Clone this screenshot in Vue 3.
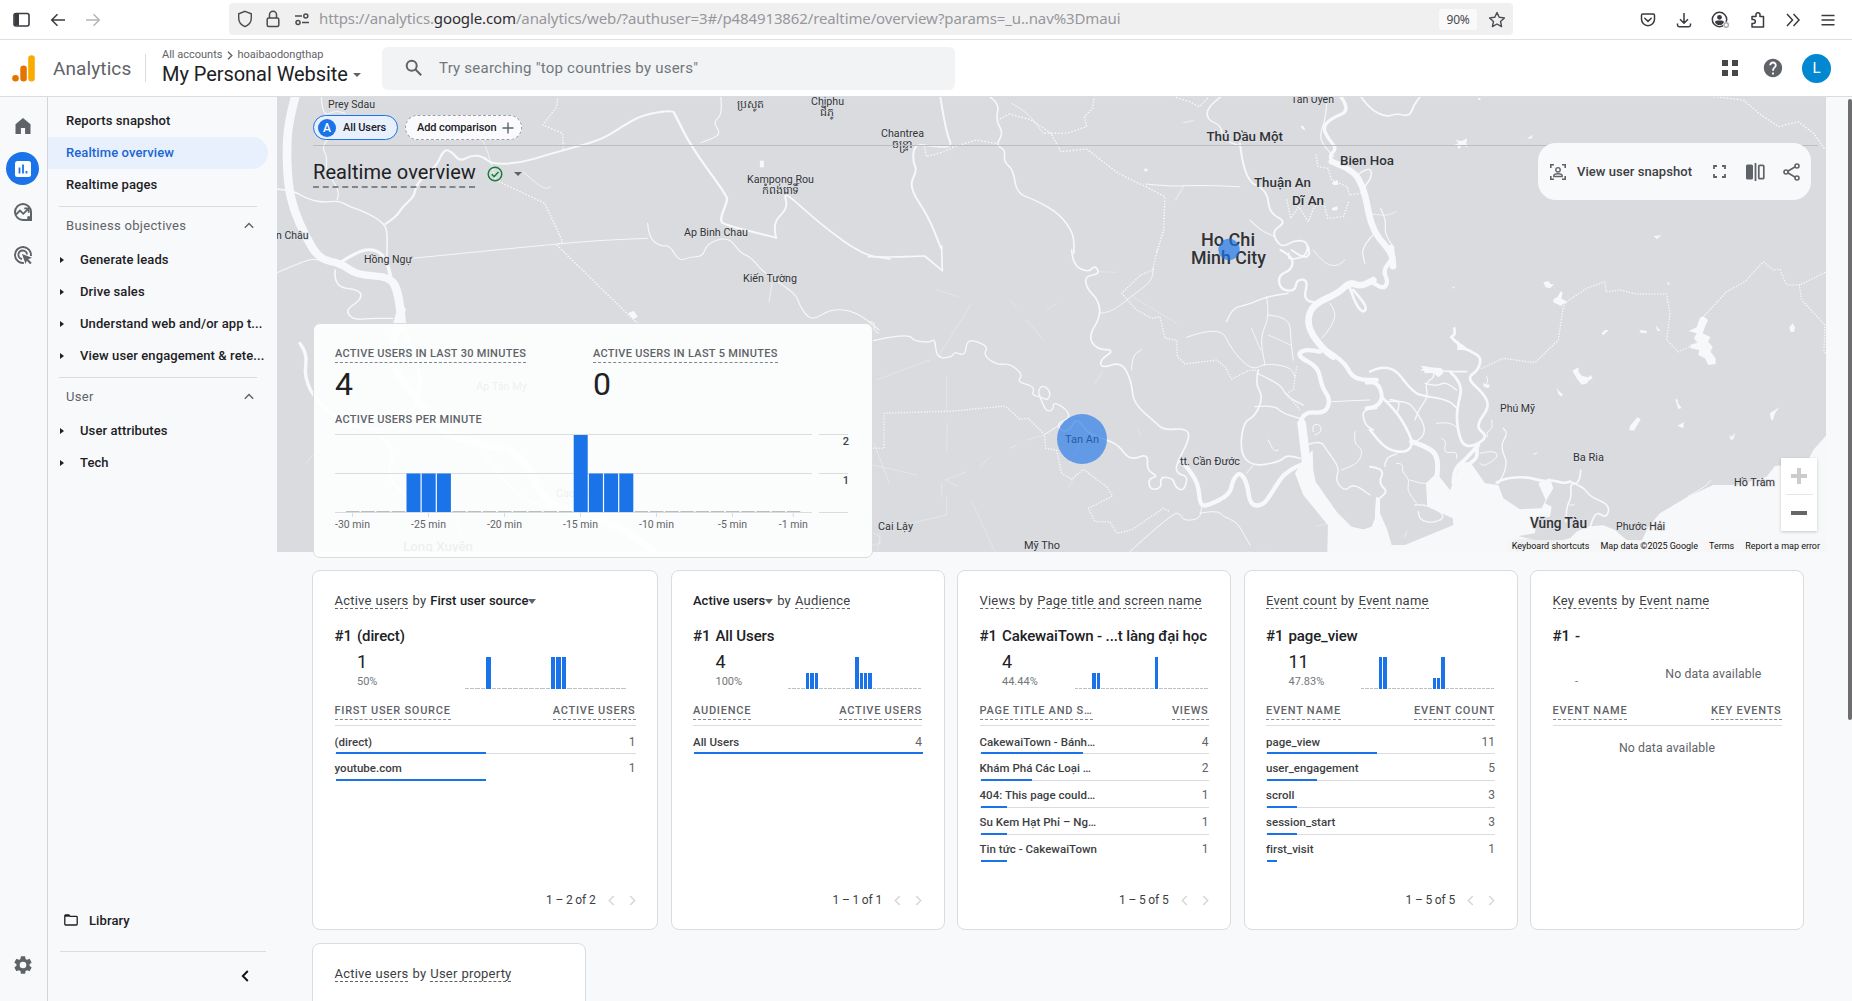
<script setup>
const smooth = (s) => {
  const p = s.split(' ').map((q) => q.split(',').map(Number))
  let d = `M${p[0]}`
  for (let i = 1; i < p.length - 1; i++) {
    d += `Q${p[i]} ${(p[i][0] + p[i + 1][0]) / 2},${(p[i][1] + p[i + 1][1]) / 2}`
  }
  return d + `L${p[p.length - 1]}`
}

// Waterways and borders, grouped by map tile: [stroke width, points]
const tiles = [
  {
    t: 'translate(270 90) scale(.3954 .3333)',
    rivers: [
      [22, '66,10 50,80 42,160 45,280 60,360 90,440 125,508 180,520 220,555 305,560 325,610 335,720'],
      [9, '175,520 225,480 270,478 295,510 305,560'],
      [4, '18,297 60,302 90,325 130,338 175,332 200,350 240,365 292,402 297,440 295,520'],
      [6, '292,402 320,380 335,350 365,320 370,280 420,230 440,178 460,185 480,215 510,195 540,200 560,222 630,220 700,195 760,175 840,148 890,110 940,75 1018,60 1025,75 1065,170 1156,318 1156,335 1137,390 1150,405 1280,443'],
      [5, '1280,443 1270,400 1310,355 1300,310 1320,325 1400,410 1500,495 1568,507'],
      [2.5, '360,505 720,462 850,450 955,445'],
      [3, '955,400 958,445 990,470 1010,465 1035,515 1060,500 1095,500 1105,460 1160,440 1190,490 1215,500 1250,550 1330,610 1340,650 1370,695 1420,655 1480,665 1520,700 1540,720'],
      [4, '165,540 160,590 230,600 230,630 190,660 210,690 250,685 310,685'],
      [3, '18,548 95,507 125,510'],
      [3, '130,20 132,80 165,62 190,70'],
      [3, '145,150 130,170 145,200 140,240 175,300 170,330'],
      [3, '1140,20 1145,75 1120,95 1140,130 1120,145 1090,158'],
      [2, '485,75 510,110 545,160 558,220'],
      [2, '640,245 690,300 710,290'],
      [2, '1270,580 1262,635'],
      [3, '50,340 60,380 75,420']
    ],
    dots: [
      '728,20 725,50 690,105 740,130 742,180',
      '560,222 570,270 695,340 740,455 725,465 920,690 950,720'
    ],
    lakes: ['905,670 920,662 930,680 920,688', '1239,212 1249,212 1249,232 1239,232']
  },
  {
    t: 'translate(620 0) scale(.3954 .3333)',
    rivers: [
      [5, '810,290 825,400 842,442 790,440 745,430 740,485 752,510 730,560 780,650 812,745'],
      [4, '935,290 960,310 950,360 970,400 950,435 975,450 970,485 995,510 1003,580 1050,600 1110,640 1148,700 1148,760'],
      [3, '1330,552 1400,560 1450,555 1568,560'],
      [2, '1425,560 1405,600'],
      [2, '990,310 1030,335 1070,400'],
      [4, '1520,290 1485,320 1485,360 1520,375 1525,420 1568,438'],
      [2, '1425,368 1450,362']
    ],
    dots: [
      '842,442 900,420 950,430',
      '770,440 775,470 820,455 842,442',
      '955,360 985,342 1040,360 1090,400 1115,455 1180,447 1260,520 1330,560 1378,590 1375,690 1357,760',
      '1200,290 1195,325 1175,350 1180,380 1130,400 1070,400',
      '1400,290 1440,305 1465,320 1490,290'
    ],
    lakes: ['1326,506 1334,506 1334,514 1326,514']
  },
  {
    t: 'translate(1240 0) scale(.3903 .3333)',
    rivers: [
      [9, '255,285 285,330 235,355 212,380 225,415 248,445 230,465 235,485 290,510 315,560'],
      [17, '235,485 290,510 315,560 325,610 335,670 355,715 390,760 392,800'],
      [3, '222,310 220,355 205,400 210,430 240,470'],
      [5, '310,290 330,325 375,352 400,340 435,350 445,315 465,285'],
      [5, '0,430 10,540 70,570 75,640 120,665 80,695 105,745 140,720 175,725 170,770 125,780 125,760'],
      [4, '300,525 330,500 340,525 320,560'],
      [3, '360,625 375,660 370,700 395,745'],
      [3, '25,660 50,690 90,710'],
      [3, '345,700 310,740 320,790'],
      [2, '330,640 370,650 400,635']
    ],
    dots: [
      '195,465 200,500 225,505 235,540 275,560 280,585 310,580',
      '120,600 130,655 150,620 175,665 190,620 215,610 225,655 265,650 280,600',
      '1215,290 1290,300 1335,345 1380,380 1430,365 1470,400 1500,450'
    ],
    lakes: [
      '543,437 560,430 552,420 568,423 582,415 580,430 584,442 568,436 562,448 556,438',
      '736,414 752,404 745,417',
      '1060,708 1080,706 1068,717',
      '155,378 162,378 168,390 160,388',
      '610,294 616,294 616,300 610,300',
      '235,548 250,540 252,554 240,556',
      '235,625 250,618 250,630 238,632'
    ]
  },
  {
    t: 'translate(870 250) scale(.3333)',
    rivers: [
      [5, '-5,20 60,22 164,18'],
      [5, '164,18 217,62'],
      [5, '217,62 215,-12'],
      [20, '1510,90 1475,112 1440,95 1405,130 1335,160 1313,200 1320,245 1362,300 1390,320'],
      [13, '1360,295 1420,330 1445,380 1480,390 1520,390'],
      [8, '1435,100 1455,160 1480,190 1492,170 1450,120'],
      [13, '1350,305 1305,295 1280,318 1345,350 1355,410 1382,450 1365,490 1310,485 1288,515 1305,580 1312,640'],
      [26, '1295,520 1305,600 1315,700'],
      [13, '1305,640 1250,660 1210,720 1180,768 1140,765 1132,700 1110,665 1088,690 1080,735 1010,768 990,765 985,700 950,650 930,630'],
      [5, '605,0 608,45 655,68 675,45 690,72 645,78 650,115 685,150 692,200 655,260 680,298 735,300 690,330 695,355 755,335 785,395 790,460 860,520 880,540 950,535 960,565 915,650 925,672 955,680 940,725 915,710 910,685 870,680 875,715 840,720 835,685 865,680 830,660 835,610 780,632 745,585 710,570'],
      [4, '10,272 50,262 120,255 130,272 180,278 195,265 200,325 245,322 253,305 285,318 290,275 310,270 355,290 340,315 380,345 420,340 460,375 440,395 495,410 485,435 510,440 535,452 542,425 520,405 503,420 515,455 530,485 550,480 550,455 590,478 600,505 560,520 575,545 600,540 620,502 650,545 680,560 710,570'],
      [7, '1232,0 1270,20 1265,60 1225,75 1230,118 1275,125 1280,88 1315,90 1300,150 1345,160'],
      [6, '1265,0 1300,25 1320,15 1315,-10'],
      [3, '950,262 1050,225 1085,300 1145,362 1185,340 1260,350 1275,380'],
      [4, '1070,215 1085,175 1130,165 1190,140 1255,130'],
      [3, '1190,140 1200,200 1170,260 1185,345'],
      [3, '1195,195 1260,200 1262,270 1270,330'],
      [2.5, '1145,235 1165,285 1172,300'],
      [2.5, '1195,255 1262,285'],
      [5, '1165,360 1155,400 1180,440 1155,500 1120,515 1110,610 1150,650 1230,635 1250,615 1290,625'],
      [4, '1165,372 1230,400 1250,440 1300,465'],
      [4, '1155,470 1210,465 1240,490 1290,505'],
      [3, '1150,645 1130,670'],
      [3, '1195,570 1210,605 1225,600'],
      [2.5, '688,190 720,190 785,138 845,95 850,55'],
      [3, '780,905 910,785 935,795 940,812 990,808 995,770'],
      [3, '990,790 1040,780 1060,800 1100,815 1120,850 1140,885'],
      [4, '1310,585 1350,570 1370,600 1410,655 1395,690 1425,725 1450,700 1500,735'],
      [3, '1330,545 1325,525 1350,522 1355,545 1335,555'],
      [5, '1520,475 1475,475 1485,525 1510,540'],
      [3, '1455,545 1450,580 1480,600 1465,640 1415,660'],
      [3, '1385,455 1500,450'],
      [3, '1380,160 1400,185 1385,230 1355,265'],
      [2.5, '1330,0 1360,40 1400,50 1425,30'],
      [3, '785,360 785,320 815,298'],
      [3, '0,215 15,215 10,240 25,250'],
      [3, '525,553 580,518']
    ],
    faint: [
      '302,165 205,320', '20,390 180,330', '230,380 230,480', '232,520 230,600', '10,645 140,675', '290,665 225,690 265,710',
      '305,755 375,905', '700,360 675,400', '785,138 920,220', '420,150 440,172', '470,210 520,270', '200,120 265,140',
      '690,65 740,67', '470,570 523,555', '420,595 440,585', '215,700 215,740', '230,740 230,795 80,830', '530,180 560,160',
      '330,650 362,620', '595,712 620,670', '1338,830 1372,820', '640,560 600,640', '30,850 30,880 10,885', '805,540 812,558'
    ],
    dots: [
      '10,595 42,595 42,490 250,483 405,468 450,508 475,505 523,553 527,595 560,600 575,670 605,688 640,658 710,710 728,738 655,775 675,815 720,815 740,850 785,840 880,775 900,785',
      '862,0 848,60 812,75 755,130 800,180 845,205 870,200 885,265 920,270 922,320 945,342 1040,330 1065,350 1085,388 1135,362 1165,360',
      '1280,350 1270,420 1250,430 1290,480'
    ],
    lakes: ['1300,630 1328,600 1330,660 1337,695 1400,785 1445,830 1480,838 1520,830 1520,910 1372,910 1374,826 1300,735 1275,670']
  },
  {
    t: 'translate(1370 250) scale(.3333)',
    rivers: [
      [13, '63,-10 75,20 38,60 55,95 40,118 0,92'],
      [7, '0,365 60,335 130,430 175,440'],
      [5, '175,440 235,448 265,480'],
      [12, '-10,398 20,392 40,440 22,470 -10,475'],
      [8, '40,445 75,480 105,525 130,580 110,608 50,600 0,540'],
      [15, '125,575 185,595 205,630 200,690'],
      [8, '240,365 280,400 262,470 260,520 275,585 310,590 355,560 315,530 360,470 340,430 290,385 325,360 335,320 290,300 240,262 255,255 253,235'],
      [12, '325,585 290,625 255,655 250,700'],
      [11, '320,590 325,620 300,640'],
      [4, '265,275 262,298 300,300'],
      [4, '135,510 145,480 175,440 165,400 195,380 185,355 155,350'],
      [5, '155,360 190,355 225,365 290,365'],
      [4, '165,400 200,410 225,395 260,420'],
      [4, '45,455 110,450 140,485 165,530 160,560 130,580'],
      [4, '80,490 95,455 60,448'],
      [6, '0,650 45,655 25,700 55,725 20,750 18,800'],
      [4, '45,650 45,625 80,612'],
      [3, '215,565 230,570 220,610 260,605 260,625'],
      [4, '385,700 418,650 390,590 413,550 400,535'],
      [8, '380,698 400,685 470,680 520,695 545,690 580,700 600,695'],
      [5, '600,695 640,710 660,740 720,765 710,805 680,785 665,815 660,835'],
      [5, '632,660 630,700 600,700 605,740 590,770 588,815'],
      [3, '600,765 612,765'],
      [3, '330,610 370,600 388,620 340,650 330,640'],
      [3, '340,408 355,400 350,380'],
      [3, '80,640 100,640 95,665 120,690 110,720 140,760'],
      [4, '135,765 175,762 230,800 190,820 150,810 145,785'],
      [3, '200,520 235,515 265,535'],
      [3, '365,510 370,535 350,545 352,560'],
      [3, '120,690 150,700 170,700'],
      [3, '955,738 1000,715 1022,692'],
      [2, '110,845 105,860']
    ],
    dots: [
      '335,355 400,325 495,338 565,270 580,170 590,155',
      '590,155 650,115 705,95 708,125 750,120 800,132 890,132 900,190 890,270 925,305 970,285',
      '1005,195 1070,125 1125,95 1180,35 1210,60 1230,58 1250,105 1290,105 1370,65',
      '1288,105 1295,150 1365,225 1362,300 1370,315'
    ],
    lakes: [
      '-10,835 5,830 15,805 18,740 30,745 30,790 52,840 65,885 105,885 250,825 248,805 205,785 172,770 168,700 200,670 240,720 250,700 270,640 300,635 345,700 385,705 400,745 450,778 515,775 527,750 505,700 540,685 550,715 535,740 525,760 545,770 540,800 500,805 495,850 445,858 470,865 495,868 430,870 440,905 600,865 620,845 650,830 700,826 735,840 770,870 815,872 835,830 870,790 950,742 1030,705 1100,705 1190,680 1215,648 1310,640 1330,600 1372,553 1372,910 -10,910',
      '990,203 1000,198 1014,210 1005,230 998,250 1022,262 1014,275 1028,290 1022,305 1037,325 1037,342 1015,345 1005,325 985,315 988,300 962,295 960,285 982,278 972,265 980,250 956,243 980,232',
      '520,97 535,93 542,102 552,103 540,115 527,112',
      '573,122 578,130 574,145 590,155 572,167 550,157 550,148 563,140',
      '607,362 625,352 626,365 635,377 655,382 662,374 668,385 655,393 652,400 635,404 622,388',
      '780,528 802,502 812,508 792,542 778,540',
      '1200,490 1228,472 1215,490 1208,513 1202,505',
      '1258,232 1268,220 1275,232 1272,246 1262,246',
      '695,250 705,240 716,240 700,256',
      '808,240 830,242 830,250 812,248',
      '857,226 872,244 862,242',
      '560,410 566,422 578,433 575,440 565,432',
      '916,448 923,448 924,460 935,474 925,477',
      '922,527 942,517 940,535',
      '1078,556 1085,560 1096,548 1090,568 1082,570',
      '410,880 420,868 425,905 412,895',
      '238,262 245,255 255,268 270,280 285,290 280,300 262,300 262,285 250,270',
      '155,347 180,352 215,355 220,370 205,382 190,368 165,370',
      '893,97 898,97 898,104 893,104',
      '248,110 253,110 253,115 248,115',
      '488,612 505,606 495,614',
      '338,400 360,405 355,415 345,412'
    ]
  },
  {
    t: 'translate(300 310) scale(.3827 .3333)',
    rivers: [
      [22, '265,0 235,110 255,200 340,310 370,370 480,405 560,420 600,480 640,570 690,600 760,620 850,660 920,720'],
      [9, '0,100 20,130 10,200 45,280 130,350 200,360 260,350 300,300 320,200 275,60'],
      [9, '205,370 250,420 225,500 280,560'],
      [6, '470,410 520,500 600,580 690,600'],
      [4, '390,560 430,600 400,620 425,680']
    ],
    faint: ['15,460 60,400', '560,90 420,100', '900,100 1300,400', '1240,460 1100,620', '1500,400 1540,520', '1480,660 1515,680 1510,720'],
    dots: [],
    lakes: []
  }
]

// [text, left, baseline, width, font size, weight]
const labels = [
  ['Prey Sdau', 328, 108, 47, 11, 400],
  ['Chiphu', 811, 105, 33, 11, 400],
  ['Chantrea', 881, 137, 43, 11, 400],
  ['Kampong Rou', 747, 183, 67, 11, 400],
  ['Tân Uyên', 1291, 103, 43, 11, 400],
  ['Thủ Dầu Một', 1206.5, 141, 76.5, 13.5, 500],
  ['Bien Hoa', 1340, 164.5, 54, 13.5, 500],
  ['Thuận An', 1254, 187, 57, 13.5, 500],
  ['Dĩ An', 1292, 205, 32, 13.5, 500],
  ['Ho Chi', 1201, 246, 54, 17.5, 500],
  ['Minh City', 1191, 264, 75, 17.5, 500],
  ['n Châu', 276, 239, 32.5, 11, 400],
  ['Hồng Ngự', 364, 262.5, 48, 11, 400],
  ['Ap Binh Chau', 684, 235.5, 64, 11, 400],
  ['Kiến Tường', 743, 281.5, 54, 11, 400],
  ['Ap Tân My', 476, 390, 51, 11, 400],
  ['Cao Lãnh', 556, 497, 45, 11, 400],
  ['Long Xuyên', 403, 550.5, 70, 13.5, 500],
  ['Cai Lậy', 878, 530, 35, 11, 400],
  ['Mỹ Tho', 1024, 549, 36, 11, 400],
  ['Gò Công', 1240, 560, 41, 11, 400],
  ['tt. Cần Đước', 1180, 465, 60, 11, 400],
  ['Tan An', 1065, 442.5, 34, 11, 400],
  ['Phú Mỹ', 1500, 412, 35, 11, 400],
  ['Ba Ria', 1573, 461, 31, 11, 400],
  ['Hồ Tràm', 1734, 485.5, 41, 11, 400],
  ['Vũng Tàu', 1530, 527.5, 57, 14, 500],
  ['Phước Hải', 1616, 530, 49, 11, 400]
]
const khmer = [
  ['ប្រសូត', 750, 108],
  ['ជីភូ', 826.5, 116],
  ['ចន្ទ្រា', 901.5, 147.5],
  ['កំពង់រោទិ៍', 780.5, 193.5]
]

const minuteBars = { 4: 1, 5: 1, 6: 1, 15: 2, 16: 1, 17: 1, 18: 1 }
const ticks = [[0, '-30 min'], [5, '-25 min'], [10, '-20 min'], [15, '-15 min'], [20, '-10 min'], [25, '-5 min'], [29, '-1 min']]

const objectives = ['Generate leads', 'Drive sales', 'Understand web and/or app t...', 'View user engagement & rete...']
const userItems = ['User attributes', 'Tech']

const cards = [
  {
    wide: true, title: [['Active users', 'u'], ['by', ''], ['First user source', 'pick']], top: '(direct)', value: '1', pct: '50%',
    bars: { 4: 32, 16: 32, 17: 32, 18: 32 }, cols: ['First user source', 'Active users'],
    rows: [['(direct)', 1, 150], ['youtube.com', 1, 150]], page: '1 – 2 of 2'
  },
  {
    title: [['Active users', 'pick'], ['by', ''], ['Audience', 'u']], top: 'All Users', value: '4', pct: '100%',
    bars: { 4: 16, 5: 16, 6: 16, 15: 32, 16: 16, 17: 16, 18: 16 }, cols: ['Audience', 'Active users'],
    rows: [['All Users', 4, 229]], page: '1 – 1 of 1'
  },
  {
    title: [['Views', 'u'], ['by', ''], ['Page title and screen name', 'u']], top: 'CakewaiTown - ...t làng đại học', value: '4', pct: '44.44%',
    bars: { 4: 16, 5: 16, 18: 32 }, cols: ['Page title and s…', 'Views'],
    rows: [['CakewaiTown - Bánh…', 4, 102], ['Khám Phá Các Loại …', 2, 51], ['404: This page could…', 1, 26], ['Su Kem Hạt Phỉ – Ng…', 1, 26], ['Tin tức - CakewaiTown', 1, 26]], page: '1 – 5 of 5'
  },
  {
    title: [['Event count', 'u'], ['by', ''], ['Event name', 'u']], top: 'page_view', value: '11', pct: '47.83%',
    bars: { 4: 32, 5: 32, 16: 11, 17: 11, 18: 32 }, cols: ['Event name', 'Event count'],
    rows: [['page_view', 11, 110], ['user_engagement', 5, 50], ['scroll', 3, 30], ['session_start', 3, 30], ['first_visit', 1, 10]], page: '1 – 5 of 5'
  },
  {
    title: [['Key events', 'u'], ['by', ''], ['Event name', 'u']], top: '-', value: '', pct: '-',
    bars: null, cols: ['Event name', 'Key events'], rows: [], page: ''
  }
]
</script>

<template>
  <div class="window">
    <div class="browser">
      <div class="nav-buttons">
        <svg width="18" height="16" viewBox="0 0 18 16"><rect x="1" y="1.5" width="15" height="12.5" rx="2" fill="none" stroke="#3a3a40" stroke-width="1.6" /><rect x="1.5" y="2" width="4.5" height="11.5" fill="#3a3a40" /></svg>
        <svg width="16" height="16" viewBox="0 0 16 16" fill="none" stroke="#3a3a40" stroke-width="1.5"><path d="M15 8H2M7.5 2.2L1.7 8l5.8 5.8" /></svg>
        <svg width="16" height="16" viewBox="0 0 16 16" fill="none" stroke="#b5b5b9" stroke-width="1.5"><path d="M1 8h13M8.500 2.200L14.300 8l-5.800 5.800" /></svg>
      </div>
      <div class="urlbar">
        <svg width="16" height="18" viewBox="0 0 16 18" fill="none" stroke="#4a4a50" stroke-width="1.4"><path d="M8 1.300l6.300 2.500v4.500c0 4-2.700 6.800-6.300 8.300-3.600-1.500-6.300-4.300-6.300-8.300V3.800z" /></svg>
        <svg class="lock" width="14" height="18" viewBox="0 0 14 18" fill="none" stroke="#4a4a50" stroke-width="1.5"><rect x="1.200" y="8" width="11.600" height="8.500" rx="1.500" /><path d="M3.500 8V4.800a3.500 3.500 0 017 0V8" /></svg>
        <svg class="perm" width="16" height="14" viewBox="0 0 16 14" fill="none" stroke="#4a4a50" stroke-width="1.500"><path d="M1 4h7M8 10.500h7" /><circle cx="11.800" cy="4" r="2" /><circle cx="4" cy="10.500" r="2" /></svg>
        <span class="url">https://analytics.<b>google.com</b>/analytics/web/?authuser=3#/p484913862/realtime/overview?params=_u..nav%3Dmaui</span>
        <span class="zoom">90%</span>
        <svg width="18" height="17" viewBox="0 0 18 17" fill="none" stroke="#4a4a50" stroke-width="1.400" stroke-linejoin="round"><path d="M9 1.500l2.200 4.800 5.200.6-3.900 3.500 1.100 5.200L9 13l-4.600 2.600 1.100-5.200L1.600 6.900l5.200-.6z" /></svg>
      </div>
      <div class="ext">
        <svg width="16" height="16" viewBox="0 0 16 16" fill="none" stroke="#3a3a40" stroke-width="1.500"><path d="M2.800 2h10.400c.8 0 1.300.5 1.300 1.300v3.900a6.500 6.500 0 01-13 0V3.300C1.500 2.500 2 2 2.800 2z" /><path d="M4.800 6.300L8 9.400l3.200-3.100" stroke-linecap="round" /></svg>
        <svg width="16" height="16" viewBox="0 0 16 16" fill="none" stroke="#3a3a40" stroke-width="1.500"><path d="M8 1v10M4 7.200l4 4 4-4M1.500 11.500v1.500c0 1 .6 1.700 1.700 1.700h9.600c1.100 0 1.700-.7 1.700-1.700v-1.500" /></svg>
        <svg width="19" height="18" viewBox="0 0 19 18"><circle cx="8.500" cy="8.500" r="7.200" fill="none" stroke="#3a3a40" stroke-width="1.500" /><circle cx="8.500" cy="6.300" r="2.400" fill="#3a3a40" /><path d="M4 11.500c0-1.200 1-2 2.200-2h4.600c1.200 0 2.200.8 2.200 2-1 1.700-2.600 2.600-4.500 2.600S5 13.200 4 11.500z" fill="#3a3a40" /><circle cx="15.200" cy="14" r="3.200" fill="#fff" /><circle cx="15.200" cy="14" r="2.200" fill="none" stroke="#aaa" stroke-width="1.400" /></svg>
        <svg width="16" height="18" viewBox="0 0 16 18" fill="none" stroke="#3a3a40" stroke-width="1.500" stroke-linejoin="round"><path d="M2 16V12.500h1.300a2 2 0 000-4H2V5.500h4V3.800a2 2 0 014 0v1.700h3.500V16z" /></svg>
        <svg width="16" height="14" viewBox="0 0 16 14" fill="none" stroke="#3a3a40" stroke-width="1.500"><path d="M2 1l5.500 6L2 13M8.500 1L14 7l-5.500 6" /></svg>
        <svg width="14" height="14" viewBox="0 0 14 14" stroke="#3a3a40" stroke-width="1.500"><path d="M.5 2.500h13M.5 7h13M.5 11.800h13" /></svg>
      </div>
    </div>

    <header class="appbar">
      <svg class="logo" width="24" height="28" viewBox="0 0 24 28"><circle cx="3.500" cy="24.200" r="3.300" fill="#e37400" /><rect x="8.300" y="11.500" width="6.500" height="16" rx="3.200" fill="#e37400" /><rect x="16.200" y="1.200" width="6.600" height="26.300" rx="3.200" fill="#f9ab00" /></svg>
      <span class="product">Analytics</span>
      <div class="account">
        <div class="crumb"><span>All accounts</span><svg width="6" height="9" viewBox="0 0 6 9" fill="none" stroke="#5f6368" stroke-width="1.400"><path d="M1 .7l3.800 3.800L1 8.300" /></svg><span class="acc">hoaibaodongthap</span></div>
        <div class="property">My Personal Website<i class="tri"></i></div>
      </div>
      <div class="search">
        <svg width="18" height="18" viewBox="0 0 18 18" fill="none" stroke="#5f6368" stroke-width="2"><circle cx="6.700" cy="6.700" r="5" /><path d="M10.500 10.500l5.700 5.700" /></svg>
        <span>Try searching "top countries by users"</span>
      </div>
      <div class="tools">
        <svg width="16" height="16" viewBox="0 0 16 16" fill="#474747"><path d="M0 0h6v6H0zM10 0h6v6h-6zM0 10h6v6H0zM10 10h6v6h-6z" /></svg>
        <svg class="help" width="22" height="22" viewBox="0 0 24 24" fill="#5f6368"><path d="M12 2C6.480 2 2 6.480 2 12s4.480 10 10 10 10-4.480 10-10S17.520 2 12 2zm1 17h-2v-2h2v2zm2.070-7.750l-.9.920C13.450 12.900 13 13.500 13 15h-2v-.5c0-1.100.45-2.100 1.170-2.830l1.240-1.260c.37-.36.59-.86.59-1.410 0-1.100-.9-2-2-2s-2 .9-2 2H8c0-2.210 1.790-4 4-4s4 1.790 4 4c0 .88-.36 1.680-.93 2.250z" /></svg>
        <span class="avatar">L</span>
      </div>
    </header>

    <div class="body">
      <aside class="rail">
        <svg width="20" height="20" viewBox="0 0 24 24" fill="#5f6368"><path d="M12 2.500L3 9.800V21.500h6.500v-7h5v7H21V9.800z" /></svg>
        <span class="active"><svg width="18" height="18" viewBox="0 0 18 18"><rect x="1" y="1" width="16" height="16" rx="2.500" fill="#fff" /><path d="M5.500 7.500v6M9 4.500v9M12.500 11v2.500" stroke="#1a73e8" stroke-width="1.800" /></svg></span>
        <svg width="20" height="20" viewBox="0 0 20 20" fill="none" stroke="#5f6368" stroke-width="2"><path d="M18 18V10a8 8 0 10-8 8z" /><path d="M3 12.500l4-4 3.300 3.300L15 7" stroke-width="1.800" /><path d="M11.300 6.300h4.400v4.400" stroke-width="1.800" /><circle cx="15.800" cy="15.800" r="1.700" fill="#5f6368" stroke="none" /></svg>
        <svg width="20" height="20" viewBox="0 0 20 20" fill="none" stroke="#5f6368" stroke-width="1.900"><path d="M17.900 11a8 8 0 10-7 6.900" /><path d="M14 9.500A4.300 4.300 0 109 14" /><path d="M9 9l10 3.700-3.700 1.600 3.400 3.400-1.500 1.500-3.400-3.400L12.500 19z" fill="#5f6368" stroke="none" /></svg>
        <svg class="gear" width="22" height="22" viewBox="0 0 24 24" fill="#5f6368"><path d="M19.140 12.940c.04-.3.060-.61.060-.94s-.02-.64-.07-.94l2.030-1.580a.49.49 0 00.12-.61l-1.920-3.320a.49.49 0 00-.59-.22l-2.390.96a7 7 0 00-1.620-.94l-.36-2.540A.48.48 0 0013.920 2.400h-3.840a.48.48 0 00-.47.410l-.36 2.540a7.300 7.300 0 00-1.620.94l-2.390-.96a.48.48 0 00-.59.220L2.740 8.870a.48.48 0 00.12.610l2.030 1.580a6 6 0 000 1.880l-2.030 1.580a.49.49 0 00-.12.610l1.920 3.320c.12.220.37.290.59.220l2.390-.96c.5.380 1.030.7 1.620.94l.36 2.540c.05.240.24.410.48.410h3.840c.24 0 .44-.17.470-.41l.36-2.540a7 7 0 001.620-.94l2.390.96c.22.080.47 0 .59-.22l1.920-3.320a.48.48 0 00-.12-.61zM12 15.600a3.600 3.600 0 110-7.200 3.600 3.600 0 010 7.200z" /></svg>
      </aside>

      <nav class="side">
        <a class="item first">Reports snapshot</a>
        <a class="item sel">Realtime overview</a>
        <a class="item">Realtime pages</a>
        <hr />
        <div class="sec">Business objectives<svg width="10" height="7" viewBox="0 0 10 7" fill="none" stroke="#5f6368" stroke-width="1.400"><path d="M.8 5.800L5 1.500l4.200 4.300" /></svg></div>
        <a v-for="o in objectives" :key="o" class="sub"><i></i>{{ o }}</a>
        <hr class="h2" />
        <div class="sec">User<svg width="10" height="7" viewBox="0 0 10 7" fill="none" stroke="#5f6368" stroke-width="1.400"><path d="M.8 5.800L5 1.500l4.200 4.300" /></svg></div>
        <a v-for="o in userItems" :key="o" class="sub"><i></i>{{ o }}</a>
        <div class="lib">
          <svg width="14" height="12" viewBox="0 0 14 12" fill="none" stroke="#202124" stroke-width="1.300"><path d="M.8 10.200V1.800c0-.5.300-.8.800-.8h3.200l1.300 1.400h6.300c.5 0 .8.300.8.800v7c0 .5-.3.800-.8.800H1.600c-.5 0-.8-.3-.8-.8z" /><path d="M1 1.800h4.500" stroke-width="1.800" /></svg>
          Library
        </div>
        <hr class="h3" />
        <svg class="collapse" width="8" height="12" viewBox="0 0 8 12" fill="none" stroke="#111" stroke-width="1.900"><path d="M6.800 1L1.800 6l5 5" /></svg>
      </nav>

      <main class="main">
        <svg class="map" width="1549" height="455" viewBox="277 97 1549 455">
          <rect x="277" y="97" width="1549" height="455" fill="#dadbdf" />
          <g v-for="(g, gi) in tiles" :key="gi" :transform="g.t" fill="none" stroke="#f7f8fa" stroke-linecap="round" stroke-linejoin="round">
            <path v-for="(r, i) in g.rivers" :key="'r' + i" :d="smooth(r[1])" :stroke-width="r[0]" />
            <polyline v-for="(p, i) in g.faint || []" :key="'f' + i" :points="p" stroke-width="2" opacity=".55" />
            <polyline v-for="(p, i) in g.dots" :key="'d' + i" :points="p" stroke-width="4.500" stroke-dasharray=".1 8.500" />
            <polygon v-for="(p, i) in g.lakes" :key="'l' + i" :points="p" fill="#f7f8fa" stroke="none" />
          </g>
          <g fill="#303236" stroke="#dfe0e4" stroke-width="1.500" paint-order="stroke" font-family="Roboto, sans-serif">
            <text v-for="l in labels" :key="l[0]" :x="l[1]" :y="l[2]" :textLength="l[3]" lengthAdjust="spacingAndGlyphs" :font-size="l[4]" :font-weight="l[5]">{{ l[0] }}</text>
            <text v-for="k in khmer" :key="k[0]" :x="k[1]" :y="k[2]" font-size="11" text-anchor="middle">{{ k[0] }}</text>
          </g>
          <circle cx="1082" cy="439" r="25" fill="#1a73e8" opacity=".62" />
          <circle cx="1229" cy="249.500" r="10.700" fill="#1a73e8" opacity=".68" />
        </svg>
        <div class="zoomctl"><i class="plus"></i><hr /><i class="minus"></i></div>
        <div class="attrib"><span>Keyboard shortcuts</span><span>Map data ©2025 Google</span><span>Terms</span><span>Report a map error</span></div>

        <div class="content">
          <div class="chips">
            <span class="chip all"><b>A</b>All Users</span>
            <span class="chip add">Add comparison<svg width="12" height="12" viewBox="0 0 12 12" stroke="#5f6368" stroke-width="1.400"><path d="M6 .5v11M.5 6h11" /></svg></span>
          </div>
          <div class="titlebar">
            <h1>Realtime overview</h1>
            <svg class="ok" width="16" height="16" viewBox="0 0 16 16" fill="none" stroke="#188038" stroke-width="1.500"><circle cx="8" cy="8" r="6.800" /><path d="M4.700 8.200l2.400 2.400 4.400-4.600" /></svg>
            <i class="tri"></i>
            <div class="toolbar">
              <svg width="16" height="16" viewBox="0 0 16 16" fill="none" stroke="#5f6368" stroke-width="1.600"><path d="M.8 4V.8H4M12 .8h3.200V4M.8 12v3.200H4M12 15.200h3.200V12" /><circle cx="8" cy="5.800" r="2.200" stroke-width="1.400" /><path d="M3.800 12.500v-.7c0-1.300 2-2 4.200-2s4.200.7 4.200 2v.7z" stroke-width="1.400" /></svg>
              <span>View user snapshot</span>
              <svg class="fs" width="13" height="13" viewBox="0 0 13 13" fill="none" stroke="#5f6368" stroke-width="1.800"><path d="M1 4V1h3M9 1h3v3M1 9v3h3M9 12h3V9" /></svg>
              <svg class="cmp" width="19" height="18" viewBox="0 0 19 18"><rect x="0" y="1.500" width="7" height="15" rx="1.500" fill="#5f6368" /><path d="M9.500 0v18" stroke="#5f6368" stroke-width="1.800" /><rect x="12.800" y="2.300" width="5" height="13.400" rx="1" fill="none" stroke="#5f6368" stroke-width="1.700" /></svg>
              <svg class="share" width="17" height="18" viewBox="0 0 17 18" fill="none" stroke="#5f6368" stroke-width="1.600"><path d="M3.500 9L13.500 3M3.500 9l10 6" /><circle cx="3" cy="9" r="2" fill="#f8f9fb" /><circle cx="14" cy="3" r="2" fill="#f8f9fb" /><circle cx="14" cy="15" r="2" fill="#f8f9fb" /></svg>
            </div>
          </div>

          <section class="live">
            <div class="metrics">
              <div class="metric"><span class="cap dash">Active users in last 30 minutes</span><strong>4</strong></div>
              <div class="metric"><span class="cap dash">Active users in last 5 minutes</span><strong>0</strong></div>
            </div>
            <span class="cap per">Active users per minute</span>
            <svg class="chart" width="520" height="100" viewBox="335 432 520 100">
              <g fill="#dadce0"><rect v-for="y in [434, 473, 512]" :key="y" x="335" :y="y" width="477" height="1" /><rect v-for="y in [434, 473, 512]" :key="'b' + y" x="819" :y="y" width="29" height="1" /></g>
              <g v-for="i in 30" :key="i">
                <rect v-if="minuteBars[i - 1]" :x="345.700 + 15.200 * (i - 1)" :y="512 - 38.500 * minuteBars[i - 1]" width="14" :height="38.500 * minuteBars[i - 1]" fill="#1a73e8" />
                <rect v-else :x="346 + 15.200 * (i - 1)" y="511" width="13.500" height="1" fill="#b9bcc2" />
              </g>
              <g font-family="Roboto, sans-serif" font-size="10.500" fill="#5f6368" text-anchor="middle">
                <template v-for="t in ticks" :key="t[1]"><rect :x="352 + 15.200 * t[0]" y="513" width="1" height="4" fill="#dadce0" /><text :x="352.500 + 15.200 * t[0]" y="528">{{ t[1] }}</text></template>
                <text x="846" y="445" font-weight="500" font-size="11" fill="#3c4043">2</text><text x="846" y="484" font-weight="500" font-size="11" fill="#3c4043">1</text>
              </g>
            </svg>
          </section>

          <div class="cards">
            <section v-for="(c, ci) in cards" :key="ci" class="card" :class="{ wide: c.wide }">
              <div class="title"><template v-for="(p, i) in c.title" :key="i"><span :class="p[1]">{{ p[0] }}</span>{{ i < 2 ? ' ' : '' }}</template></div>
              <div class="top"><span class="rank">#1</span>{{ c.top }}</div>
              <div class="sum">
                <div class="nums"><div class="val">{{ c.value }}</div><div class="pct">{{ c.pct }}</div></div>
                <div v-if="c.bars" class="spark"><i v-for="n in 30" :key="n" :class="{ on: c.bars[n - 1] }" :style="{ height: (c.bars[n - 1] || 1) + 'px' }"></i></div>
                <div v-else class="none">No data available</div>
              </div>
              <div class="thead"><span>{{ c.cols[0] }}</span><span>{{ c.cols[1] }}</span></div>
              <div v-for="r in c.rows" :key="r[0]" class="row"><b>{{ r[0] }}</b><span>{{ r[1] }}</span><i :style="{ width: r[2] + 'px' }"></i></div>
              <div v-if="!c.rows.length" class="empty">No data available</div>
              <div v-if="c.page" class="pager">{{ c.page }}
                <svg width="7" height="11" viewBox="0 0 7 11" fill="none" stroke="#d5d7db" stroke-width="1.500"><path d="M5.800 1L1.300 5.500l4.500 4.500" /></svg>
                <svg width="7" height="11" viewBox="0 0 7 11" fill="none" stroke="#d5d7db" stroke-width="1.500"><path d="M1.200 1l4.500 4.500L1.200 10" /></svg>
              </div>
            </section>
            <section class="card last"><div class="title"><span class="u">Active users</span> by <span class="u">User property</span></div></section>
          </div>
        </div>
        <i class="scroll"></i>
      </main>
    </div>
  </div>
</template>

<style>
body { margin: 0; overflow: hidden; }
</style>

<style scoped>
* { box-sizing: border-box; }
.window { width: 1852px; height: 1001px; overflow: hidden; display: flex; flex-direction: column; background: #f8f9fb; font-family: Roboto, sans-serif; color: #202124; }
svg { display: block; flex: none; }
.browser { height: 40px; flex: none; display: flex; align-items: center; background: #fff; border-bottom: 1px solid #e0e0e1; }
.nav-buttons { display: flex; gap: 19px; padding-left: 13px; width: 229px; align-items: center; }
.urlbar { width: 1284px; height: 32px; background: #f0f0f1; border-radius: 4px; display: flex; align-items: center; padding: 0 7px 0 8px; margin-top: -1px; }
.lock { margin-left: 13px; }
.perm { margin-left: 14px; }
.url { margin-left: 9px; font-family: "Noto Sans", sans-serif; font-size: 15px; letter-spacing: -.12px; color: #97979b; white-space: nowrap; flex: 1; margin-top: -2px; }
.url b { font-weight: 400; color: #2c2c31; }
.zoom { width: 38px; height: 21px; border-radius: 3px; background: #f9f9fa; text-align: center; line-height: 21px; font-family: "Noto Sans", sans-serif; letter-spacing: -.3px; color: #4a4a50; margin-right: 11px; font-size: 12px; }
.ext { flex: 1; display: flex; justify-content: space-between; align-items: center; padding: 0 17px 0 127px; }
.appbar { height: 57px; flex: none; display: flex; align-items: center; background: #fff; border-bottom: 1px solid #dadce0; }
.logo { margin-left: 12px; }
.product { margin-left: 17px; width: 92px; font-size: 19px; letter-spacing: .1px; color: #5f6368; }
.account { border-left: 1px solid #dadce0; height: 28px; width: 237px; padding-left: 16px; display: flex; flex-direction: column; justify-content: center; }
.crumb { display: flex; align-items: center; font-size: 11px; line-height: 14px; color: #5f6368; margin-top: -2px; }
.crumb svg { margin: 0 4px 0 5px; }
.property { font-size: 20px; line-height: 25px; letter-spacing: -.05px; display: flex; align-items: center; white-space: nowrap; margin-bottom: -1px; }
.tri { border: 4px solid transparent; border-top: 4px solid #5f6368; border-bottom: 0; display: inline-block; flex: none; }
.property .tri { margin-left: 5px; margin-top: 0; }
.search { width: 573px; height: 43px; border-radius: 6px; background: #f1f3f4; display: flex; align-items: center; padding-left: 23px; font-size: 15px; letter-spacing: .23px; color: #72777c; }
.search span { margin-left: 16px; }
.tools { flex: 1; display: flex; align-items: center; justify-content: flex-end; padding-right: 21px; }
.help { margin: 0 18px 0 24px; }
.avatar { width: 29px; height: 29px; border-radius: 50%; background: #0288d1; color: #fff; font-size: 15px; line-height: 29px; text-align: center; }
.body { flex: 1; display: flex; min-height: 0; }
.rail { width: 48px; flex: none; border-right: 1px solid #d3d5d9; display: flex; flex-direction: column; align-items: center; padding: 19px 2px 25px 0; }
.active { width: 33px; height: 33px; border-radius: 50%; background: #1a73e8; display: flex; align-items: center; justify-content: center; margin: 16px 0 17px; }
.rail svg:nth-of-type(2) { margin-bottom: 23px; }
.gear { margin-top: auto; }
.side { width: 229px; flex: none; display: flex; flex-direction: column; font-size: 13px; font-weight: 500; letter-spacing: .1px; }
.item { height: 32px; line-height: 31px; padding-left: 18px; flex: none; }
.first { margin-top: 8px; }
.sel { background: #e8f0fe; color: #1967d2; border-radius: 0 16px 16px 0; width: 220px; }
.side hr { width: 198px; height: 1px; border: 0; background: #dadce0; margin: 5px 0 4px 11px; flex: none; }
.side .h2 { margin-top: 6px; }
.side .h3 { width: 206px; margin: 15px 0 18px 12px; }
.sec { height: 32px; display: flex; align-items: center; justify-content: space-between; padding: 0 23px 3px 18px; color: #5f6368; font-weight: 400; letter-spacing: .3px; flex: none; }
.sub { height: 32px; display: flex; align-items: center; white-space: nowrap; flex: none; }
.sub i { width: 0; height: 0; border: 3px solid transparent; border-left: 4px solid #202124; border-right: 0; margin: 1px 16px 0 12px; }
.lib { margin-top: auto; height: 32px; display: flex; align-items: center; gap: 11px; padding-left: 16px; flex: none; }
.collapse { margin: 0 0 19px 193px; }
.main { flex: 1; position: relative; }
.map { position: absolute; left: 0; top: 0; }
.zoomctl { position: absolute; left: 1504px; top: 361px; width: 36px; height: 73px; background: #fff; box-shadow: 0 1px 3px rgba(0, 0, 0, .2); display: flex; flex-direction: column; align-items: center; }
.zoomctl hr { width: 27px; height: 1px; border: 0; background: #e6e6e6; margin: 0; }
.plus, .minus { width: 16px; height: 36px; }
.plus { background: linear-gradient(#ccc, #ccc) center/16px 4px no-repeat, linear-gradient(#ccc, #ccc) center/4px 16px no-repeat; }
.minus { background: linear-gradient(#666, #666) center/16px 4px no-repeat; }
.attrib { position: absolute; right: 26px; top: 443px; height: 12px; display: flex; gap: 1px; font-size: 9px; line-height: 13px; letter-spacing: -.02px; color: #111; white-space: nowrap; }
.attrib span { background: rgba(245, 245, 245, .75); padding: 0 5px; }
.attrib span:last-child { padding-right: 6px; }
.content { position: relative; margin-left: 36px; display: flex; flex-direction: column; }
.chips { width: 1505px; height: 49px; padding-top: 18px; display: flex; gap: 7px; border-bottom: 1px solid #bcbdc2; }
.chip { height: 25px; border-radius: 13px; display: flex; align-items: center; font-size: 11px; font-weight: 500; letter-spacing: -.1px; }
.all { width: 85px; border: 1px solid #1a73e8; background: #e8f0fe; padding-left: 4px; }
.all b { width: 18px; height: 18px; border-radius: 50%; background: #1a73e8; color: #fff; font-size: 12px; font-weight: 500; text-align: center; line-height: 18px; margin-right: 7px; }
.add { width: 117px; background: #fafafc; border: 1px dashed #9aa0a6; padding: 0 7px 0 11px; justify-content: space-between; white-space: nowrap; }
.titlebar { width: 1498px; height: 177px; display: flex; align-items: flex-start; }
h1 { margin: 13px 0 0; width: 162px; height: 29px; font-size: 20px; line-height: 26px; font-weight: 400; letter-spacing: .07px; white-space: nowrap; border-bottom: 2px dashed #80868b; }
.ok { margin: 20px 0 0 12px; }
.titlebar > .tri { margin: 26px 0 0 11px; }
.toolbar { margin: -3px 0 0 auto; width: 273px; height: 57px; border-radius: 18px; background: #f8f9fb; display: flex; align-items: center; padding-left: 12px; font-size: 13px; font-weight: 500; color: #3c4043; white-space: nowrap; }
.toolbar span { margin-left: 11px; width: 116px; letter-spacing: .05px; }
.fs { margin-left: 20px; }
.cmp { margin-left: 20px; }
.share { margin-left: 18px; }
.live { width: 560px; height: 235px; background: rgba(253, 254, 254, .93); border: 1px solid #dadce0; border-radius: 7px; padding: 22px 0 0 21px; display: flex; flex-direction: column; align-items: flex-start; }
.metrics { display: flex; height: 66px; }
.metric { width: 258px; display: flex; flex-direction: column; align-items: flex-start; }
.cap { font-size: 11px; font-weight: 500; letter-spacing: .3px; line-height: 16px; color: #5f6368; text-transform: uppercase; white-space: nowrap; }
.dash { border-bottom: 1px dashed #80868b; }
.metric strong { font-size: 32px; line-height: 40px; font-weight: 400; margin-top: 1px; }
.chart { margin-top: 4px; }
.cards { margin-top: 12px; display: flex; flex-wrap: wrap; width: 1500px; column-gap: 12.5px; row-gap: 13px; margin-left: -1px; }
.card { width: 274px; height: 360px; flex: none; background: #fff; border: 1px solid #dadce0; border-radius: 8px; padding: 21px 21.500px 0; display: flex; flex-direction: column; }
.wide { width: 346px; }
.title { height: 19px; line-height: 18px; font-size: 13px; letter-spacing: .2px; word-spacing: .6px; color: #3c4043; white-space: nowrap; }
.title .u { border-bottom: 1px dashed #5f6368; }
.title .pick { color: #202124; font-weight: 500; letter-spacing: 0; word-spacing: .3px; }
.title .pick::after { content: ""; display: inline-block; border: 4px solid transparent; border-top: 5px solid #5f6368; border-bottom: 0; vertical-align: 1px; }
.top { margin-top: 14px; height: 22px; line-height: 22px; font-size: 15px; font-weight: 500; letter-spacing: -.12px; white-space: nowrap; }
.rank { display: inline-block; width: 22.500px; }
.sum { display: flex; justify-content: space-between; height: 42px; padding-left: 22.500px; margin-top: 6px; }
.val { height: 20px; line-height: 20px; font-size: 18px; margin-top: -1px; }
.pct { font-size: 11px; line-height: 14px; color: #72777c; margin-top: 3px; }
.spark { width: 133px; height: 32px; margin: 4px 1px 0 0; display: flex; gap: 1px; align-items: flex-end; }
.wide .spark { width: 161px; margin-right: 10px; }
.spark i { flex: 1; background: #bdc1c6; }
.spark i.on { background: #1a73e8; }
.none { font-size: 12.300px; letter-spacing: .1px; color: #5f6368; line-height: 16px; margin: 13px 20px 0 0; }
.thead { height: 26px; margin-top: 5px; display: flex; justify-content: space-between; border-bottom: 1px solid #dadce0; flex: none; }
.thead span { font-size: 11px; font-weight: 500; letter-spacing: .75px; line-height: 14px; height: 18px; text-transform: uppercase; color: #5f6368; border-bottom: 1px dashed #80868b; padding-top: 2px; margin-top: 2px; white-space: nowrap; }
.row { height: 27px; display: flex; justify-content: space-between; align-items: center; font-size: 12px; border-bottom: 1px solid #dadce0; position: relative; padding-top: 2px; color: #3c4043; flex: none; }
.thead + .row { height: 28px; padding-top: 4px; }
.row b { font-weight: 500; font-size: 11.500px; letter-spacing: .03px; }
.row span { color: #5f6368; }
.row i { position: absolute; left: 1px; bottom: -1px; height: 2px; background: #1a73e8; }
.row:nth-last-child(2) { border-bottom-color: transparent; }
.empty { text-align: center; font-size: 12.300px; letter-spacing: .1px; color: #5f6368; margin-top: 15px; }
.pager { margin-top: auto; margin-bottom: 21px; height: 16px; display: flex; align-items: center; justify-content: flex-end; font-size: 12px; letter-spacing: -.15px; color: #3c4043; }
.pager svg { margin-left: 12px; }
.pager svg + svg { margin-left: 14px; }
.last { height: 120px; }
.scroll { position: absolute; right: 0; top: 2px; width: 4px; height: 621px; background: #6e6e70; border-radius: 2px; }
</style>
